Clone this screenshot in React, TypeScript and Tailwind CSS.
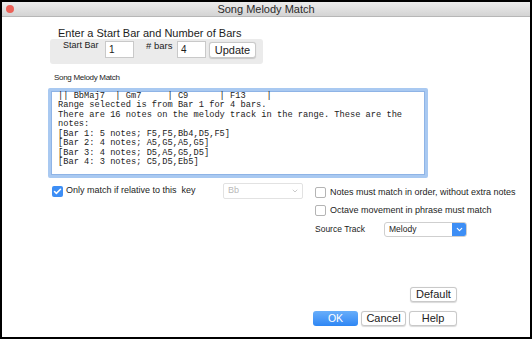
import { Check, ChevronDown } from "lucide-react";

const lines = [
  "|| BbMaj7  | Gm7     | C9      | F13    |",
  "Range selected is from Bar 1 for 4 bars.",
  "There are 16 notes on the melody track in the range. These are the",
  "notes:",
  "[Bar 1: 5 notes; F5,F5,Bb4,D5,F5]",
  "[Bar 2: 4 notes; A5,G5,A5,G5]",
  "[Bar 3: 4 notes; D5,A5,G5,D5]",
  "[Bar 4: 3 notes; C5,D5,Eb5]",
];

function Box({ checked }: { checked?: boolean }) {
  if (checked) {
    return (
      <span className="flex size-[11px] shrink-0 items-center justify-center rounded-[2px] bg-[#3d8ef5]">
        <Check className="size-[9px] text-white" strokeWidth={4} />
      </span>
    );
  }
  return <span className="block size-[11px] shrink-0 rounded-[2px] border border-[#b4b4b4] bg-white" />;
}

function Btn({ children, className = "" }: { children: React.ReactNode; className?: string }) {
  return (
    <div
      className={`flex h-[15px] items-center justify-center rounded-[3px] border border-[#c9c9c9] bg-white text-[11px] text-[#222] shadow-[0_0.5px_1px_rgba(0,0,0,0.15)] ${className}`}
    >
      {children}
    </div>
  );
}

export default function App() {
  return (
    <div className="flex h-[339px] w-[532px] flex-col border-2 border-black bg-white font-['Liberation_Sans',sans-serif] text-[9px] text-[#1c1c1c]">
      {/* title bar */}
      <div className="relative flex h-[15px] shrink-0 items-center justify-center border-b border-[#b7b7b7] bg-gradient-to-b from-[#ececec] to-[#d4d4d4]">
        <span className="absolute left-[4px] top-[3px] size-[8px] rounded-full bg-[#ec6158]" />
        <span className="text-[11px] text-[#2a2a2a]">Song Melody Match</span>
      </div>

      {/* start bar section */}
      <div className="ml-[56px] mt-[10px] text-[11px] leading-[12px]">Enter a Start Bar and Number of Bars</div>
      <div className="ml-[48px] flex h-[25px] w-[213px] items-start rounded-[3px] bg-[#ebebeb] pt-[2px]">
        <span className="ml-[13px] w-[42px] text-[9px] leading-[9px]">Start Bar</span>
        <div className="flex h-[17px] w-[29px] items-end border border-[#c9c9c9] bg-white pb-[1px] pl-[3px] text-[10px] leading-[12px]">1</div>
        <span className="ml-[12px] w-[31px] text-[9.5px] leading-[9px]"># bars</span>
        <div className="flex h-[17px] w-[29px] items-end border border-[#c9c9c9] bg-white pb-[1px] pl-[3px] text-[10px] leading-[12px]">4</div>
        <Btn className="ml-[3px] mt-[1px] h-[16px] w-[47px] text-[10.5px]">Update</Btn>
      </div>

      {/* melody text */}
      <div className="ml-[52px] mt-[8px] text-[8px] leading-[12px] tracking-[-0.3px]">Song Melody Match</div>
      <div className="ml-[46px] mt-[4px] h-[90px] w-[380px] rounded-[2px] border-[3px] border-[#a9c9f1]">
        <div className="h-full border border-[#8fb4e6] bg-white pl-[6px] font-['Liberation_Mono',monospace] text-[8.7px] leading-[9.45px] text-[#222]">
          {lines.map((l, i) => (
            <div key={i} className="whitespace-pre">
              {l}
            </div>
          ))}
        </div>
      </div>

      {/* options */}
      <div className="mt-[5px] flex items-start">
        <div className="flex h-[16px] items-center">
          <span className="ml-[50px]">
            <Box checked />
          </span>
          <span className="ml-[3px] w-[157px]">Only match if relative to this&nbsp; key</span>
          <div className="flex h-[16px] w-[80px] items-center justify-between rounded-[2px] border border-[#e2e2e2] bg-white pl-[4px] pr-[3px] text-[#b9b9b9]">
            <span>Bb</span>
            <ChevronDown className="size-[8px] text-[#b0b0b0]" />
          </div>
        </div>
        <div className="ml-[12px] flex flex-col leading-[11px]">
          <div className="mt-[4px] flex items-center gap-[4px]">
            <Box />
            <span>Notes must match in order, without extra notes</span>
          </div>
          <div className="mt-[7px] flex items-center gap-[4px]">
            <Box />
            <span>Octave movement in phrase must match</span>
          </div>
          <div className="mt-[6px] flex items-center">
            <span className="w-[69px] text-[8.5px]">Source Track</span>
            <div className="flex h-[15px] w-[83px] items-center overflow-hidden rounded-[3px] border border-[#cfcfcf] bg-white text-[8.5px]">
              <span className="flex-1 pl-[4px]">Melody</span>
              <span className="flex h-full w-[14px] items-center justify-center bg-[#3d8ef5]">
                <ChevronDown className="size-[9px] text-white" strokeWidth={3} />
              </span>
            </div>
          </div>
        </div>
      </div>

      {/* buttons */}
      <div className="mt-[50px] flex justify-end pr-[73px]">
        <Btn className="w-[47px]">Default</Btn>
      </div>
      <div className="mt-[9px] flex justify-end gap-[3px] pr-[73px]">
        <div className="flex h-[15px] w-[45px] items-center justify-center rounded-[3px] bg-gradient-to-b from-[#68aefa] to-[#2d86f4] text-[10.5px] text-white">
          OK
        </div>
        <Btn className="w-[45px]">Cancel</Btn>
        <Btn className="w-[48px]">Help</Btn>
      </div>
    </div>
  );
}
